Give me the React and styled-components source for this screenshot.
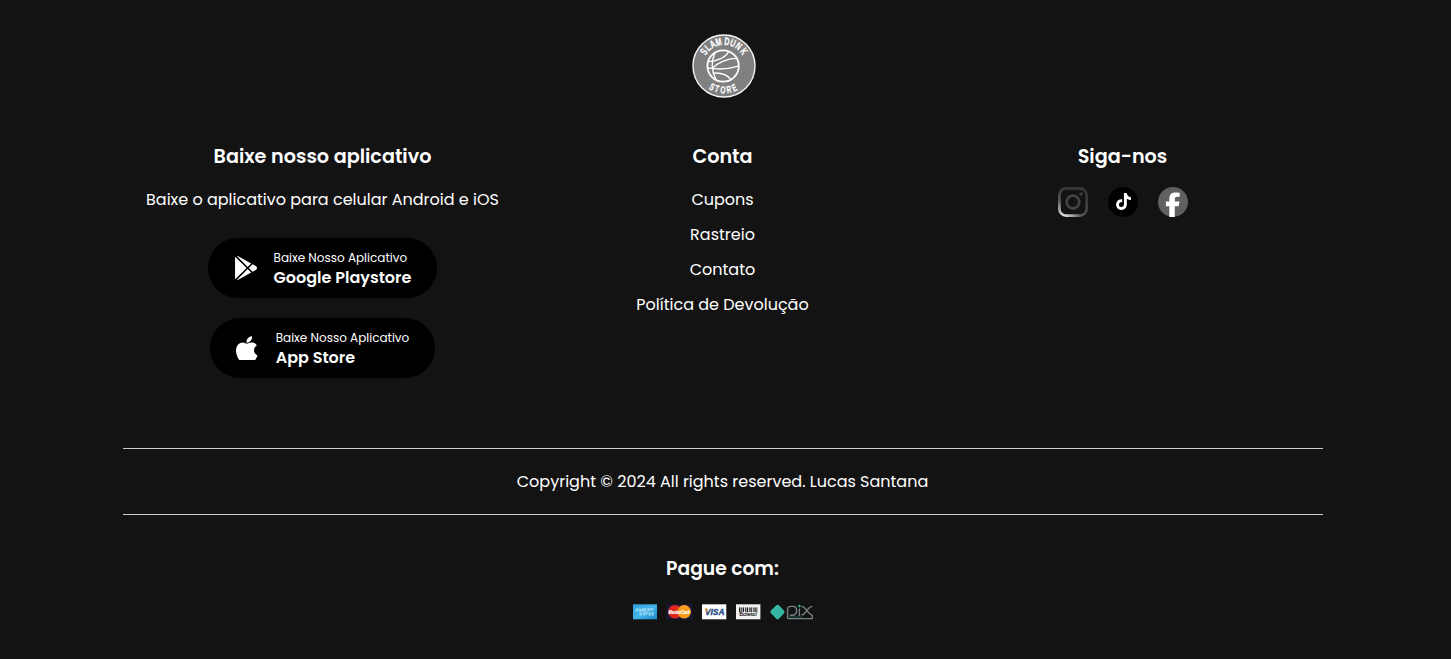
import React from "react";
import styled, { createGlobalStyle } from "styled-components";
import { FaTiktok } from "react-icons/fa";

const GlobalStyle = createGlobalStyle`
  * { box-sizing: border-box; margin: 0; padding: 0; }
  body {
    background: #131313;
    color: #fff;
    font-family: Poppins, Inter, sans-serif;
    font-size: 16px;
  }
`;

const Footer = styled.footer`
  width: 1445px;
  height: 659px;
  padding-top: 34px;
  display: flex;
  flex-direction: column;
  align-items: center;
  overflow: hidden;
`;

const LogoSlot = styled.div`
  height: 64px;
  padding-left: 3px;
  svg { display: block; }
`;

const Columns = styled.div`
  width: 1200px;
  height: 306px;
  margin-top: 44px;
  display: grid;
  grid-template-columns: repeat(3, 400px);
`;

const Column = styled.section`
  display: flex;
  flex-direction: column;
  align-items: center;
`;

const Title = styled.h3`
  font-size: ${(p) => p.$size || 19.2}px;
  font-weight: 600;
  line-height: 29px;
`;

const Description = styled.p`
  margin-top: 17px;
  line-height: 24px;
`;

const Stores = styled.div`
  margin-top: 26px;
  display: flex;
  flex-direction: column;
  align-items: center;
  gap: 20px;
`;

const StoreButton = styled.a`
  height: 60px;
  padding: 0 25.5px;
  border-radius: 30px;
  background: #000;
  color: #fff;
  display: flex;
  align-items: center;
  gap: 16px;
  svg { flex: none; }
`;

const StoreText = styled.span`
  display: flex;
  flex-direction: column;
  padding-top: 5px;
`;

const StoreHint = styled.span`
  font-size: 12px;
  line-height: 12px;
  margin-bottom: 2px;
`;

const StoreName = styled.span`
  font-weight: 600;
  line-height: 24px;
`;

const Links = styled.ul`
  margin-top: 17px;
  list-style: none;
  display: flex;
  flex-direction: column;
  gap: 11px;
  text-align: center;
`;

const LinkItem = styled.li`
  line-height: 24px;
`;

const Socials = styled.div`
  margin-top: 16px;
  padding-left: 1px;
  display: flex;
  gap: 20px;
`;

const TikTokBadge = styled.span`
  width: 30px;
  height: 30px;
  padding-bottom: 1px;
  border-radius: 50%;
  background: #000;
  display: flex;
  align-items: center;
  justify-content: center;
`;

const Copyright = styled.p`
  width: 1200px;
  height: 67px;
  border-top: 1px solid #ccc;
  border-bottom: 1px solid #ccc;
  text-align: center;
  line-height: 65px;
`;

const Payments = styled.section`
  margin-top: 39px;
  display: flex;
  flex-direction: column;
  align-items: center;
`;

const PaymentList = styled.div`
  margin-top: 21px;
  display: flex;
  gap: 10px;
  svg { display: block; overflow: visible; }
`;

const TOP = [["S", -55], ["L", -41], ["A", -27.5], ["M", -12.5], ["D", 7], ["U", 21.5], ["N", 36.5], ["K", 54]];
const BOTTOM = [["S", 29.5], ["T", 17], ["O", 2.5], ["R", -12], ["E", -25.5]];

function Logo() {
  const font = {
    fontFamily: '"Liberation Sans", sans-serif',
    fontWeight: 700,
    fill: "#fff",
    stroke: "#fff",
    strokeWidth: 0.25,
    textAnchor: "middle",
  };
  return (
    <svg width="64" height="64" viewBox="-32 -32 64 64">
      <circle r="31" fill="#808080" stroke="#f4f4f4" strokeWidth="1.4" />
      {TOP.map(([c, a]) => (
        <text key={c} {...font} fontSize="10.6" transform={`rotate(${a}) translate(0 -21) scale(.66 1)`}>{c}</text>
      ))}
      {BOTTOM.map(([c, a]) => (
        <text key={c} {...font} fontSize="10" transform={`rotate(${a}) translate(0 27.4) scale(.66 1)`}>{c}</text>
      ))}
      <g transform="translate(-.9 0)" fill="none" stroke="#fff" strokeWidth="1.4">
        <circle r="15.7" strokeWidth="1.8" />
        <path d="M-8.3-13C-11.8-5-11.6 5-7 14" />
        <path d="M-14.6-4.4C-8-4.4 1.5-7.6 5.5-14.2" />
        <path d="M-15.4 1.9C-5 3.8 6 3 15.5.2" />
        <path d="M-11 2.4C-6-2.6 4-7.8 13.6-7.6" />
        <path d="M-10.2 7.2C-3 6.6 4 8.6 7.6 13.4" />
      </g>
    </svg>
  );
}

const PlayIcon = () => (
  <svg width="24" height="24" viewBox="0 0 512 512" fill="#fff">
    <path d="M99.617 8.057a50.191 50.191 0 00-38.815-6.713l230.932 230.932 74.846-74.846L99.617 8.057zM32.139 20.116c-6.441 8.563-10.148 19.077-10.148 30.199v411.358c0 11.123 3.708 21.636 10.148 30.199l235.877-235.877L32.139 20.116zM464.261 212.087l-67.266-37.637-81.544 81.544 81.548 81.548 67.273-37.64c16.117-9.03 25.738-25.442 25.738-43.908s-9.621-34.877-25.749-43.907zM291.733 279.711L60.815 510.629c3.786.891 7.639 1.371 11.492 1.371a50.275 50.275 0 0027.31-8.07l266.965-149.372-74.849-74.847z" />
  </svg>
);

const AppleIcon = () => (
  <svg width="24" height="24" viewBox="28 -3 278 278" fill="#fff">
    <path d="M40.738 112.119c-25.785 44.745-9.393 112.648 19.121 153.82C74.092 286.523 88.502 305 108.239 305c.372 0 .745-.007 1.127-.022 9.273-.37 15.974-3.225 22.453-5.984 7.274-3.1 14.797-6.305 26.597-6.305 11.226 0 18.39 3.101 25.318 6.099 6.828 2.954 13.861 6.01 24.253 5.815 22.232-.414 35.882-20.352 47.925-37.941 12.567-18.365 18.871-36.196 20.998-43.01l.086-.271a2.5 2.5 0 00-1.311-3.035c-4.1-1.7-38.583-16.9-38.818-58.4-.335-33.74 25.763-51.6 30.997-54.84l.244-.15a2.5 2.5 0 00.7-3.52c-18-26.34-45.62-30.34-56.73-30.82a50.04 50.04 0 00-4.95-.24c-13.06 0-25.56 4.93-35.61 8.9-6.94 2.73-12.93 5.1-17.06 5.1-4.64 0-10.67-2.4-17.65-5.16-9.33-3.7-19.9-7.9-31.1-7.9-26.79.28-52.03 15.46-66.09 39.73z" />
    <path d="M212.101 0c-15.763.642-34.672 10.345-45.974 23.583-9.605 11.127-18.988 29.679-16.516 48.379a2.5 2.5 0 002.285 2.164c1.064.083 2.15.125 3.23.126 15.413 0 32.04-8.527 43.395-22.257 11.951-14.498 17.994-33.104 16.166-49.77A2.5 2.5 0 00212.101 0z" />
  </svg>
);

const InstagramIcon = () => (
  <svg width="30" height="30" viewBox="0 0 30 30" fill="none">
    <defs>
      <radialGradient id="ig" gradientUnits="userSpaceOnUse" cx="5" cy="31" r="30">
        <stop offset="0" stopColor="#f0f0f0" />
        <stop offset=".3" stopColor="#aaa" />
        <stop offset=".6" stopColor="#585858" />
        <stop offset="1" stopColor="#383838" />
      </radialGradient>
    </defs>
    <rect x="1.35" y="1.35" width="27.3" height="27.3" rx="7" stroke="url(#ig)" strokeWidth="2.7" />
    <circle cx="15" cy="15" r="6.3" stroke="#424242" strokeWidth="2.7" />
    <circle cx="23" cy="7" r="1.8" fill="#3c3c3c" />
  </svg>
);

const FacebookIcon = () => (
  <svg width="30" height="30" viewBox="0 0 30 30">
    <circle cx="15" cy="15" r="15" fill="#606060" />
    <path fill="#fff" d="M11.3 30V19.2H7.9v-4.8h3.4v-3c0-4 2.4-6 6-6 1.9 0 4.400.3 4.400.3v4h-2.4c-1.9 0-2.5 1.1-2.5 2.3v2.4h4.7l-.8 4.8h-3.9V30a15 15 0 0 1-5.5 0z" />
  </svg>
);

const AmexCard = () => (
  <svg width="24" height="16" viewBox="0 0 24 16">
    <defs>
      <linearGradient id="amex" x1="0" y1="0" x2="1" y2="1">
        <stop offset="0" stopColor="#2ba2dd" />
        <stop offset=".5" stopColor="#45b5ea" />
        <stop offset="1" stopColor="#1488ca" />
      </linearGradient>
    </defs>
    <rect y=".3" width="24" height="15" fill="url(#amex)" />
    <g fill="none" stroke="#b8e2f6" strokeWidth="1.2" opacity=".8">
      <path d="M2.5 7.4l1.6-2.8 1.6 2.8M7 7.4V4.8l1.5 2 1.5-2v2.6M13.5 4.9h-2v2.2h2M15 7.4V4.9h2l-1 1.6M20.5 4.9H18.7v2.4" />
      <path d="M6.5 8.8h2.4M6.5 10.8h2.4M10 8.6l2 2.4M12 8.6l-2 2.4M13.3 11.2V8.8h1.8M18 8.8h-1.7v2H18M21 8.8h-1.7v2H21" />
    </g>
  </svg>
);

const MasterCard = () => (
  <svg width="25" height="16" viewBox="0 0 25 16">
    <rect y=".3" width="25" height="15" fill="#1c1838" />
    <circle cx="8" cy="7.8" r="6.8" fill="#e02822" />
    <circle cx="17.2" cy="7.8" r="6.8" fill="#f79e1c" />
    <text x="1.6" y="9.6" fill="#fff" stroke="#fff" strokeWidth=".2" fontFamily='"Liberation Sans", sans-serif' fontSize="5" fontWeight="700" fontStyle="italic" textLength="21" lengthAdjust="spacingAndGlyphs">MasterCard</text>
  </svg>
);

const VisaCard = () => (
  <svg width="24" height="16" viewBox="0 0 24 16">
    <rect y=".3" width="24.3" height="15" fill="#fdfdfd" />
    <text x="3" y="11" fill="#1c4a85" stroke="#1c4a85" strokeWidth=".3" fontFamily='"Liberation Sans", sans-serif' fontSize="8.8" fontWeight="700" fontStyle="italic" textLength="19.4" lengthAdjust="spacingAndGlyphs">VISA</text>
    <path d="M2.4 4.5h2.8l.8 4z" fill="#e09a35" />
  </svg>
);

const BARS = [[3, 1.4], [5.2, 0.7], [6.6, 1.5], [9, 0.8], [10.6, 1.6], [13, 0.7], [14.4, 1.4], [16.8, 0.8], [18.4, 1.3], [20.4, 0.9]];

const BoletoCard = () => (
  <svg width="24" height="16" viewBox="0 0 24 16">
    <rect y=".3" width="24.4" height="15" fill="#f2f2f2" />
    {BARS.map(([x, w]) => (
      <rect key={x} x={x} y="3.4" width={w} height="4.6" fill="#222" />
    ))}
    <text x="3.2" y="12.4" fill="#222" stroke="#222" strokeWidth=".2" fontFamily='"Liberation Sans", sans-serif' fontSize="6.2" textLength="18" lengthAdjust="spacingAndGlyphs">Boleto!</text>
  </svg>
);

const PixLogo = () => (
  <svg width="43" height="16" viewBox="0 0 43 16">
    <path d="M6.2 1.3q1.4-1.2 2.8 0l5 5.2q1.1 1.4 0 2.8l-5 5.4q-1.4 1.2-2.8 0L.9 9.3q-1.1-1.4 0-2.8z" fill="#35b5a2" />
    <g fill="none" stroke="#777f84" strokeWidth="1.4">
      <path d="M17.6 15V5.7q0-3.3 3.3-3.3h1.9q3.8 0 3.8 4.2 0 4.4-3.8 4.6h-3" />
      <path d="M29.4 4.6V12M31.5 2.4c2 0 2.5.7 3.6 2l3.5 4.2c1 1.2 1.5 2.4 3.8 2.4M31.5 11c2 0 2.5-1 3.6-2.3l3.5-4.2c1-1.2 1.5-2.1 3.8-2.1" />
      <path d="M18 14.6h24.3V11" strokeWidth="1.3" />
    </g>
    <path d="M29.4.4L31 2l-1.6 1.6L27.800 2z" fill="#35b5a2" />
    <path d="M19 13h13" stroke="#1f4a44" strokeWidth="1.2" />
  </svg>
);

function Store({ icon, name }) {
  return (
    <StoreButton>
      {icon}
      <StoreText>
        <StoreHint>Baixe Nosso Aplicativo</StoreHint>
        <StoreName>{name}</StoreName>
      </StoreText>
    </StoreButton>
  );
}

export default function App() {
  return (
    <>
      <GlobalStyle />
      <Footer>
        <LogoSlot><Logo /></LogoSlot>
        <Columns>
          <Column>
            <Title>Baixe nosso aplicativo</Title>
            <Description>Baixe o aplicativo para celular Android e iOS</Description>
            <Stores>
              <Store icon={<PlayIcon />} name="Google Playstore" />
              <Store icon={<AppleIcon />} name="App Store" />
            </Stores>
          </Column>
          <Column>
            <Title>Conta</Title>
            <Links>
              {["Cupons", "Rastreio", "Contato", "Política de Devolução"].map((t) => (
                <LinkItem key={t}>{t}</LinkItem>
              ))}
            </Links>
          </Column>
          <Column>
            <Title>Siga-nos</Title>
            <Socials>
              <InstagramIcon />
              <TikTokBadge><FaTiktok size={17} color="#fff" /></TikTokBadge>
              <FacebookIcon />
            </Socials>
          </Column>
        </Columns>
        <Copyright>Copyright © 2024 All rights reserved. Lucas Santana</Copyright>
        <Payments>
          <Title $size={18.72}>Pague com:</Title>
          <PaymentList>
            <AmexCard />
            <MasterCard />
            <VisaCard />
            <BoletoCard />
            <PixLogo />
          </PaymentList>
        </Payments>
      </Footer>
    </>
  );
}
